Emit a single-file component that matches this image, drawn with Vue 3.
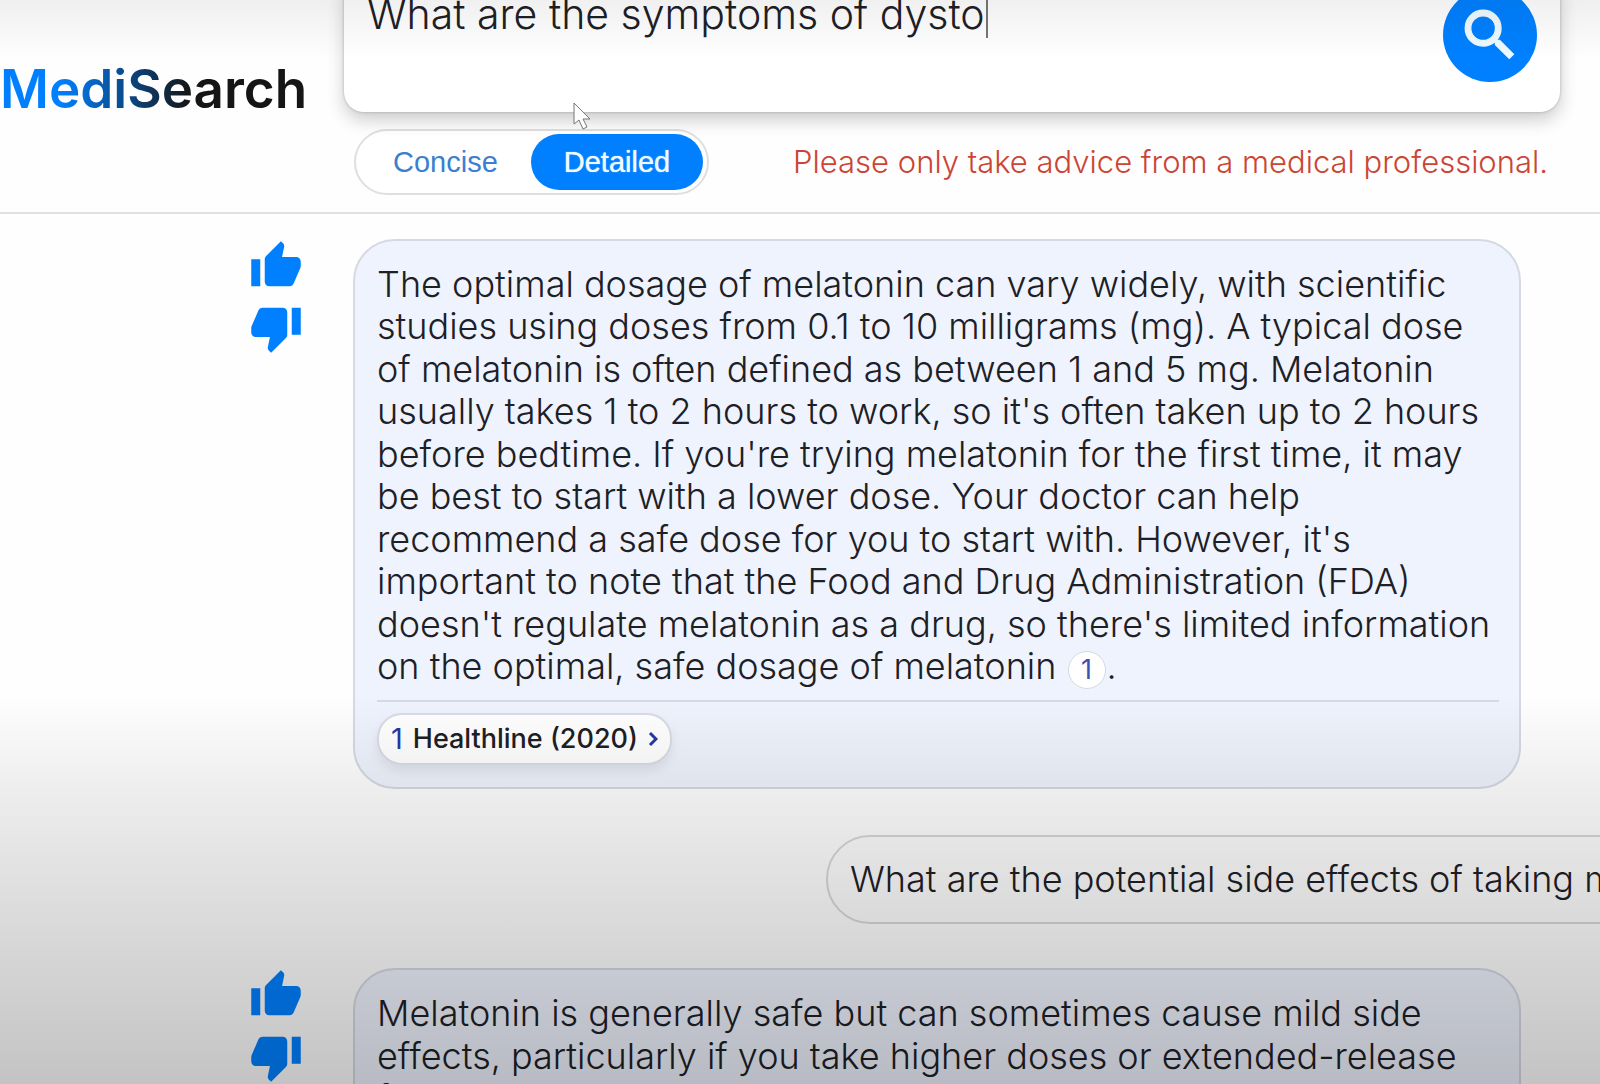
<script setup>
import { ref } from 'vue'

const query = ref('What are the symptoms of dysto')
const mode = ref('Detailed')
const modes = ['Concise', 'Detailed']

const thumbUp =
  'M1 21h4V9H1v12zm22-11c0-1.1-.9-2-2-2h-6.31l.95-4.57.03-.32c0-.41-.17-.79-.44-1.06L14.17 1 7.59 7.59C7.22 7.95 7 8.45 7 9v10c0 1.1.9 2 2 2h9c.83 0 1.54-.5 1.84-1.22l3.02-7.05c.09-.23.14-.47.14-.73v-2z'
const thumbDown =
  'M15 3H6c-.83 0-1.54.5-1.84 1.22l-3.02 7.05c-.09.23-.14.47-.14.73v2c0 1.1.9 2 2 2h6.31l-.95 4.57-.03.32c0 .41.17.79.44 1.06L9.83 23l6.59-6.59c.36-.36.58-.86.58-1.41V5c0-1.1-.9-2-2-2zm4 0v12h4V3h-4z'
const votes = [
  { label: 'Helpful', path: thumbUp },
  { label: 'Not helpful', path: thumbDown },
]

const thread = [
  {
    kind: 'answer',
    text: "The optimal dosage of melatonin can vary widely, with scientific studies using doses from 0.1 to 10 milligrams (mg). A typical dose of melatonin is often defined as between 1 and 5 mg. Melatonin usually takes 1 to 2 hours to work, so it's often taken up to 2 hours before bedtime. If you're trying melatonin for the first time, it may be best to start with a lower dose. Your doctor can help recommend a safe dose for you to start with. However, it's important to note that the Food and Drug Administration (FDA) doesn't regulate melatonin as a drug, so there's limited information on the optimal, safe dosage of melatonin",
    source: { id: 1, name: 'Healthline (2020)' },
  },
  { kind: 'question', text: 'What are the potential side effects of taking melatonin?' },
  {
    kind: 'answer',
    text: 'Melatonin is generally safe but can sometimes cause mild side effects, particularly if you take higher doses or extended-release formulations.',
  },
]
</script>

<template>
  <div class="page">
    <header class="header">
      <h1 class="logo">MediSearch</h1>
      <div class="controls">
        <form class="search" @submit.prevent>
          <textarea v-model="query" class="query" rows="2" aria-label="Medical question"></textarea>
          <span class="caret"></span>
          <button class="go" type="submit" aria-label="Search">
            <svg viewBox="0 0 24 24" aria-hidden="true">
              <path
                d="M15.5 14h-.79l-.28-.27C15.41 12.59 16 11.11 16 9.5 16 5.91 13.09 3 9.5 3S3 5.91 3 9.5 5.91 16 9.5 16c1.61 0 3.09-.59 4.23-1.57l.27.28v.79l5 4.99L20.49 19l-4.99-5zm-6 0C7.01 14 5 11.99 5 9.5S7.01 5 9.5 5 14 7.01 14 9.5 11.99 14 9.5 14z"
              />
            </svg>
          </button>
        </form>
        <div class="options">
          <div class="toggle">
            <button
              v-for="m in modes"
              :key="m"
              type="button"
              class="mode"
              :class="{ active: m === mode }"
              @click="mode = m"
            >
              {{ m }}
            </button>
          </div>
          <p class="warning">Please only take advice from a medical professional.</p>
        </div>
      </div>
    </header>

    <main class="thread">
      <template v-for="(item, i) in thread" :key="i">
        <section v-if="item.kind === 'answer'" class="row">
          <div class="votes">
            <button v-for="v in votes" :key="v.label" type="button" class="vote" :aria-label="v.label">
              <svg viewBox="0 0 24 24" aria-hidden="true"><path :d="v.path" /></svg>
            </button>
          </div>
          <article class="answer">
            <p class="text">
              {{ item.text }}
              <template v-if="item.source"
                ><a href="#" class="cite">{{ item.source.id }}</a
                >.</template
              >
            </p>
            <div v-if="item.source" class="sources">
              <a href="#" class="source">
                <span class="num">{{ item.source.id }}</span>
                <span>{{ item.source.name }}</span>
                <svg viewBox="0 0 10 16" aria-hidden="true"><path d="M2 2l6 6-6 6" /></svg>
              </a>
            </div>
          </article>
        </section>
        <p v-else class="question">{{ item.text }}</p>
      </template>
    </main>

    <div class="shade"></div>
    <svg class="pointer" viewBox="0 0 18 28" aria-hidden="true">
      <path d="M1 1v21l5-4 4 9 4-2-4-8h7z" />
    </svg>
  </div>
</template>

<style>
body {
  margin: 0;
}
</style>

<style scoped>
.page {
  position: relative;
  height: 100vh;
  overflow: hidden;
  background: #fefefe;
  color: #1d2025;
  font-family: Inter, 'Liberation Sans', sans-serif;
  font-weight: 300;
  font-size: 36px;
}
p,
h1 {
  margin: 0;
}
button {
  border: 0;
  padding: 0;
  background: none;
  cursor: pointer;
}
a {
  text-decoration: none;
}
.header {
  display: flex;
  margin-top: -24px;
  padding-right: 40px;
  border-bottom: 2px solid #e0e0e0;
}
.logo {
  flex: 0 0 344px;
  padding-top: 80px;
  background: linear-gradient(90deg, #0080ff 0, #0080ff 60px, #151515 190px);
  background-clip: text;
  -webkit-background-clip: text;
  color: transparent;
  font-size: 53px;
  line-height: 66px;
  font-weight: 600;
}
.controls {
  flex: 1;
  min-width: 0;
}
.search {
  position: relative;
  display: flex;
  align-items: flex-start;
  box-sizing: border-box;
  height: 136px;
  padding: 12px 23px 0 23px;
  border-radius: 20px;
  background: #fff;
  box-shadow: 0 8px 18px rgba(0, 0, 0, 0.2), 0 0 3px rgba(0, 0, 0, 0.25);
}
.query {
  flex: 1;
  height: 100px;
  border: 0;
  padding: 0;
  outline: 0;
  resize: none;
  background: transparent;
  color: #1d2025;
  font: 300 41px/52px Inter, 'Liberation Sans', sans-serif;
}
.caret {
  position: absolute;
  left: 642px;
  top: 22px;
  width: 2px;
  height: 40px;
  background: #777;
}
.go {
  width: 94px;
  height: 94px;
  border-radius: 50%;
  background: #0080ff;
}
.go svg {
  display: block;
  width: 66px;
  height: 66px;
  margin: 0 auto;
  fill: #eefaff;
  stroke: #eefaff;
  stroke-width: 0.5;
}
.options {
  display: flex;
  align-items: center;
  justify-content: space-between;
  padding: 17px 12px 17px 10px;
}
.toggle {
  display: flex;
  padding: 3px 4px;
  border: 2px solid #dfdfdf;
  border-radius: 34px;
  background: #fff;
}
.mode {
  height: 56px;
  padding: 0 33px;
  border-radius: 28px;
  color: #3a7fd0;
  font: 400 29px/56px 'Liberation Sans', Arial, sans-serif;
}
.mode.active {
  background: #0080ff;
  color: #eefaff;
  text-shadow: 0 0 1px #eefaff;
}
.warning {
  color: #cc4534;
  font-size: 31px;
  line-height: 36px;
}
.thread {
  display: flex;
  flex-direction: column;
  padding: 25px 79px 0 249px;
}
.row {
  display: flex;
  gap: 50px;
}
.votes {
  display: flex;
  flex-direction: column;
  gap: 8px;
}
.vote,
.vote svg {
  display: block;
  width: 54px;
  height: 54px;
  fill: #0080ff;
}
.answer {
  flex: 1;
  min-width: 0;
  padding: 22px 20px 22px 22px;
  border: 2px solid #d5d9e2;
  border-radius: 42px;
  background: #eff3fd;
}
.text {
  line-height: 1.18;
}
.cite {
  display: inline-block;
  box-sizing: border-box;
  width: 38px;
  height: 38px;
  margin: 0 1px;
  border: 1px solid #d5d9e2;
  border-radius: 50%;
  background: #fff;
  color: #3c50b4;
  font-size: 27px;
  line-height: 36px;
  font-weight: 400;
  text-align: center;
}
.sources {
  margin-top: 11px;
  padding-top: 11px;
  border-top: 2px solid #d5d9e2;
}
.source {
  display: inline-flex;
  align-items: center;
  gap: 10px;
  padding: 0 12px;
  border: 2px solid #d9dce4;
  border-radius: 25px;
  background: #fff;
  box-shadow: 0 6px 12px rgba(0, 0, 0, 0.08);
  color: #1d2025;
  font-size: 27px;
  line-height: 48px;
  font-weight: 500;
}
.num {
  color: #2438a8;
  font-size: 29px;
  font-weight: 400;
}
.source svg {
  width: 10px;
  height: 16px;
  fill: none;
  stroke: #2438a8;
  stroke-width: 3;
}
.question {
  margin: 46px -400px 44px 577px;
  padding: 0 22px;
  border: 2px solid #d8d8d8;
  border-radius: 44px;
  background: #fdfdfd;
  line-height: 85px;
  white-space: nowrap;
}
.shade {
  position: absolute;
  inset: 0;
  pointer-events: none;
  background: linear-gradient(rgba(0, 0, 0, 0.06), transparent 60px),
    linear-gradient(transparent 64%, rgba(0, 0, 0, 0.065) 73%, rgba(0, 0, 0, 0.14) 85%, rgba(0, 0, 0, 0.23));
}
.pointer {
  position: absolute;
  left: 573px;
  top: 102px;
  width: 18px;
  height: 28px;
  fill: #fff;
  stroke: #777;
}
</style>
